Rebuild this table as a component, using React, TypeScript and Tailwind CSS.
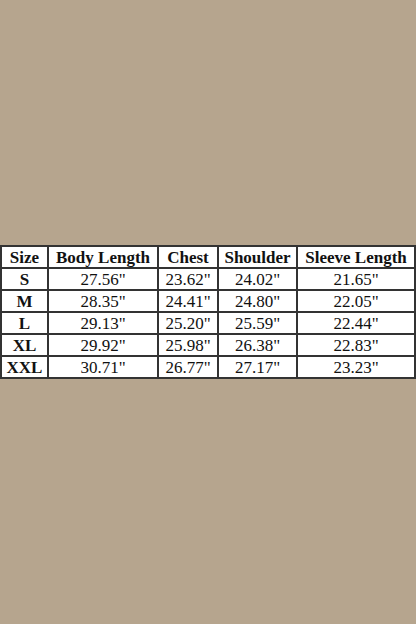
import React from "react";

const rows = [
  ["S", '27.56"', '23.62"', '24.02"', '21.65"'],
  ["M", '28.35"', '24.41"', '24.80"', '22.05"'],
  ["L", '29.13"', '25.20"', '25.59"', '22.44"'],
  ["XL", '29.92"', '25.98"', '26.38"', '22.83"'],
  ["XXL", '30.71"', '26.77"', '27.17"', '23.23"'],
];

const headers = ["Size", "Body Length", "Chest", "Shoulder", "Sleeve Length"];

export default function App() {
  return (
    <div className="w-[416px] h-[624px] bg-[#b6a58e] flex items-center justify-center">
      <table
        className="table-fixed border-collapse bg-white text-[#111] w-[414px] text-[17px] leading-none"
        style={{ fontFamily: '"Liberation Serif", "Times New Roman", serif' }}
      >
        <colgroup>
          <col className="w-[47px]" />
          <col className="w-[110px]" />
          <col className="w-[60px]" />
          <col className="w-[79px]" />
          <col className="w-[118px]" />
        </colgroup>
        <thead>
          <tr className="h-[22px]">
            {headers.map((h) => (
              <th key={h} className="border-2 border-[#333] font-bold text-center px-0 whitespace-nowrap">
                {h}
              </th>
            ))}
          </tr>
        </thead>
        <tbody>
          {rows.map((r) => (
            <tr key={r[0]} className="h-[22px]">
              {r.map((c, i) => (
                <td
                  key={i}
                  className={`border-2 border-[#333] text-center px-0 ${i === 0 ? "font-bold" : ""}`}
                >
                  {c}
                </td>
              ))}
            </tr>
          ))}
        </tbody>
      </table>
    </div>
  );
}
